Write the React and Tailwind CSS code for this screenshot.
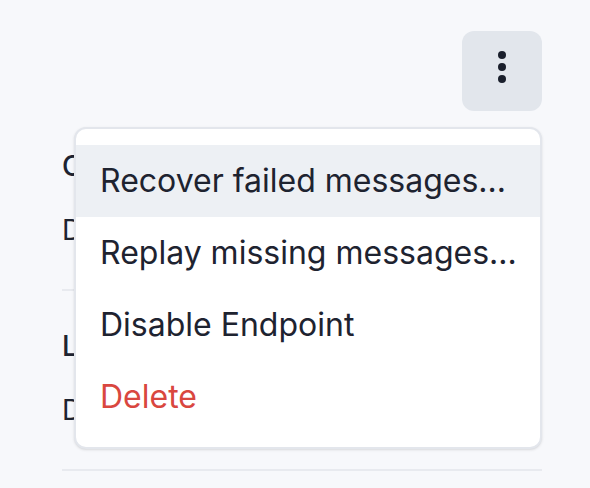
import React from 'react';

const endpoints = [
  { name: 'Customer events', description: 'Delivers order updates' },
  { name: 'Legacy sync', description: 'Disabled since last week' },
];

const menuItems = [
  { label: 'Recover failed messages...', active: true },
  { label: 'Replay missing messages...' },
  { label: 'Disable Endpoint' },
  { label: 'Delete', danger: true },
];

function DotsButton() {
  return (
    <button className="flex h-[80px] w-[80px] flex-col items-center justify-center gap-[4px] rounded-[12px] bg-[#e2e6ec] pb-[8px]">
      <span className="h-[8px] w-[8px] rounded-full bg-[#1a1f2c]" />
      <span className="h-[8px] w-[8px] rounded-full bg-[#1a1f2c]" />
      <span className="h-[8px] w-[8px] rounded-full bg-[#1a1f2c]" />
    </button>
  );
}

export default function App() {
  return (
    <div className="min-h-screen bg-[#f7f8fb] font-['Inter',sans-serif] text-[#1e2330]">
      <div className="relative ml-[62px] w-[480px] pt-[31px]">
        <div className="flex justify-end">
          <DotsButton />
        </div>

        <div className="flex flex-col">
          {endpoints.map((item) => (
            <div key={item.name} className="border-b-2 border-[#e8eaef] pt-[35px] pb-[39px]">
              <p className="text-[28px] leading-[40px] font-medium">{item.name}</p>
              <p className="mt-[24px] text-[28px] leading-[40px]">{item.description}</p>
            </div>
          ))}
        </div>

        <div className="absolute top-[127px] right-0 w-[468px] rounded-[12px] border-2 border-[#e3e6ec] bg-white pt-[16px] pb-[14px] shadow-sm">
          {menuItems.map((item) => (
            <div
              key={item.label}
              className={`flex h-[72px] items-center whitespace-nowrap px-[24px] text-[32px] ${item.active ? 'bg-[#edf0f4]' : ''} ${item.danger ? 'text-[#d9473f]' : 'text-[#1e2330]'}`}
            >
              {item.label}
            </div>
          ))}
        </div>
      </div>
    </div>
  );
}
